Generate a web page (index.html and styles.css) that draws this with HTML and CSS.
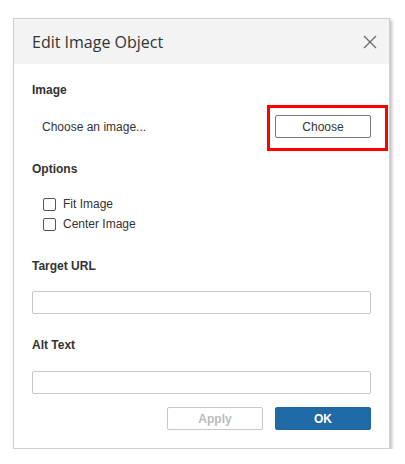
FILE: index.html
```html
<!DOCTYPE html>
<html lang="en">
<head>
    <meta charset="UTF-8">
    <title>Edit Image Object</title>
    <link rel="stylesheet" href="styles.css">
</head>
<body>
    <div class="dialog">
        <div class="dialog-header">
            <span class="dialog-title">Edit Image Object</span>
            <svg class="close-icon" width="14" height="14" viewBox="0 0 14 14">
                <path d="M1 1 L13 13 M13 1 L1 13" stroke="#6b6b6b" stroke-width="1.3" fill="none"/>
            </svg>
        </div>

        <div class="dialog-body">
            <div class="label label-first">Image</div>
            <div class="choose-row">
                <span class="choose-text">Choose an image...</span>
                <div class="choose-wrap">
                    <button class="btn btn-choose">Choose</button>
                    <div class="highlight"></div>
                </div>
            </div>

            <div class="label label-options">Options</div>
            <div class="options">
                <label class="check-row"><span class="checkbox"></span>Fit Image</label>
                <label class="check-row"><span class="checkbox"></span>Center Image</label>
            </div>

            <div class="label label-url">Target URL</div>
            <div class="text-input"></div>

            <div class="label label-alt">Alt Text</div>
            <div class="text-input input-alt"></div>

            <div class="actions">
                <button class="btn btn-apply">Apply</button>
                <button class="btn btn-ok">OK</button>
            </div>
        </div>
    </div>
</body>
</html>
```

FILE: styles.css
```css
body {
    margin: 0;
    padding: 18px 0 0 13px;
    background: #ffffff;
    font-family: "Liberation Sans", Arial, sans-serif;
    font-size: 12px;
    color: #333333;
}

.dialog {
    width: 375px;
    border: 1px solid #cfcfcf;
    background: #ffffff;
    box-shadow: 2px 2px 3px rgba(0, 0, 0, 0.25);
}

.dialog-header {
    height: 45px;
    background: #f3f3f3;
    display: flex;
    align-items: center;
    justify-content: space-between;
    padding: 0 12px 0 18px;
}

.dialog-title {
    font-family: "Open Sans", "Noto Sans", sans-serif;
    font-size: 16px;
    color: #333333;
}

.close-icon {
    display: block;
    margin-top: 1px;
}

.dialog-body {
    padding: 0 18px 18px 18px;
}

.label {
    font-weight: bold;
    line-height: 14px;
    color: #333333;
}

.label-first { margin-top: 19px; }
.label-options { margin-top: 24px; }
.label-url { margin-top: 25px; }
.label-alt { margin-top: 24px; }

.choose-row {
    display: flex;
    align-items: center;
    justify-content: space-between;
    margin-top: 18px;
    padding-left: 10px;
}

.choose-wrap {
    position: relative;
}

.btn {
    box-sizing: border-box;
    width: 96px;
    height: 23px;
    border-radius: 2px;
    font-family: "Liberation Sans", Arial, sans-serif;
    font-size: 12px;
    padding: 0;
    background: #ffffff;
    display: block;
}

.btn-choose {
    border: 1px solid #777777;
    color: #333333;
}

.highlight {
    position: absolute;
    left: -8px;
    top: -10px;
    width: 121px;
    height: 46px;
    box-sizing: border-box;
    border: 3px solid #ff0000;
}

.options {
    margin-top: 18px;
    padding-left: 11px;
}

.check-row {
    display: flex;
    align-items: center;
    height: 20px;
    color: #333333;
}

.checkbox {
    box-sizing: border-box;
    width: 13px;
    height: 13px;
    border: 1px solid #555555;
    border-radius: 2px;
    margin-right: 7px;
}

.text-input {
    box-sizing: border-box;
    height: 23px;
    border: 1px solid #c8c8c8;
    border-radius: 2px;
    margin-top: 18px;
}

.input-alt {
    margin-top: 19px;
}

.actions {
    display: flex;
    justify-content: flex-end;
    gap: 12px;
    margin-top: 13px;
}

.btn-apply {
    border: 1px solid #c8c8c8;
    color: #bbbbbb;
    font-weight: bold;
}

.btn-ok {
    border: 1px solid #1f6aa5;
    background: #1f6aa5;
    color: #ffffff;
    font-weight: bold;
}
```
